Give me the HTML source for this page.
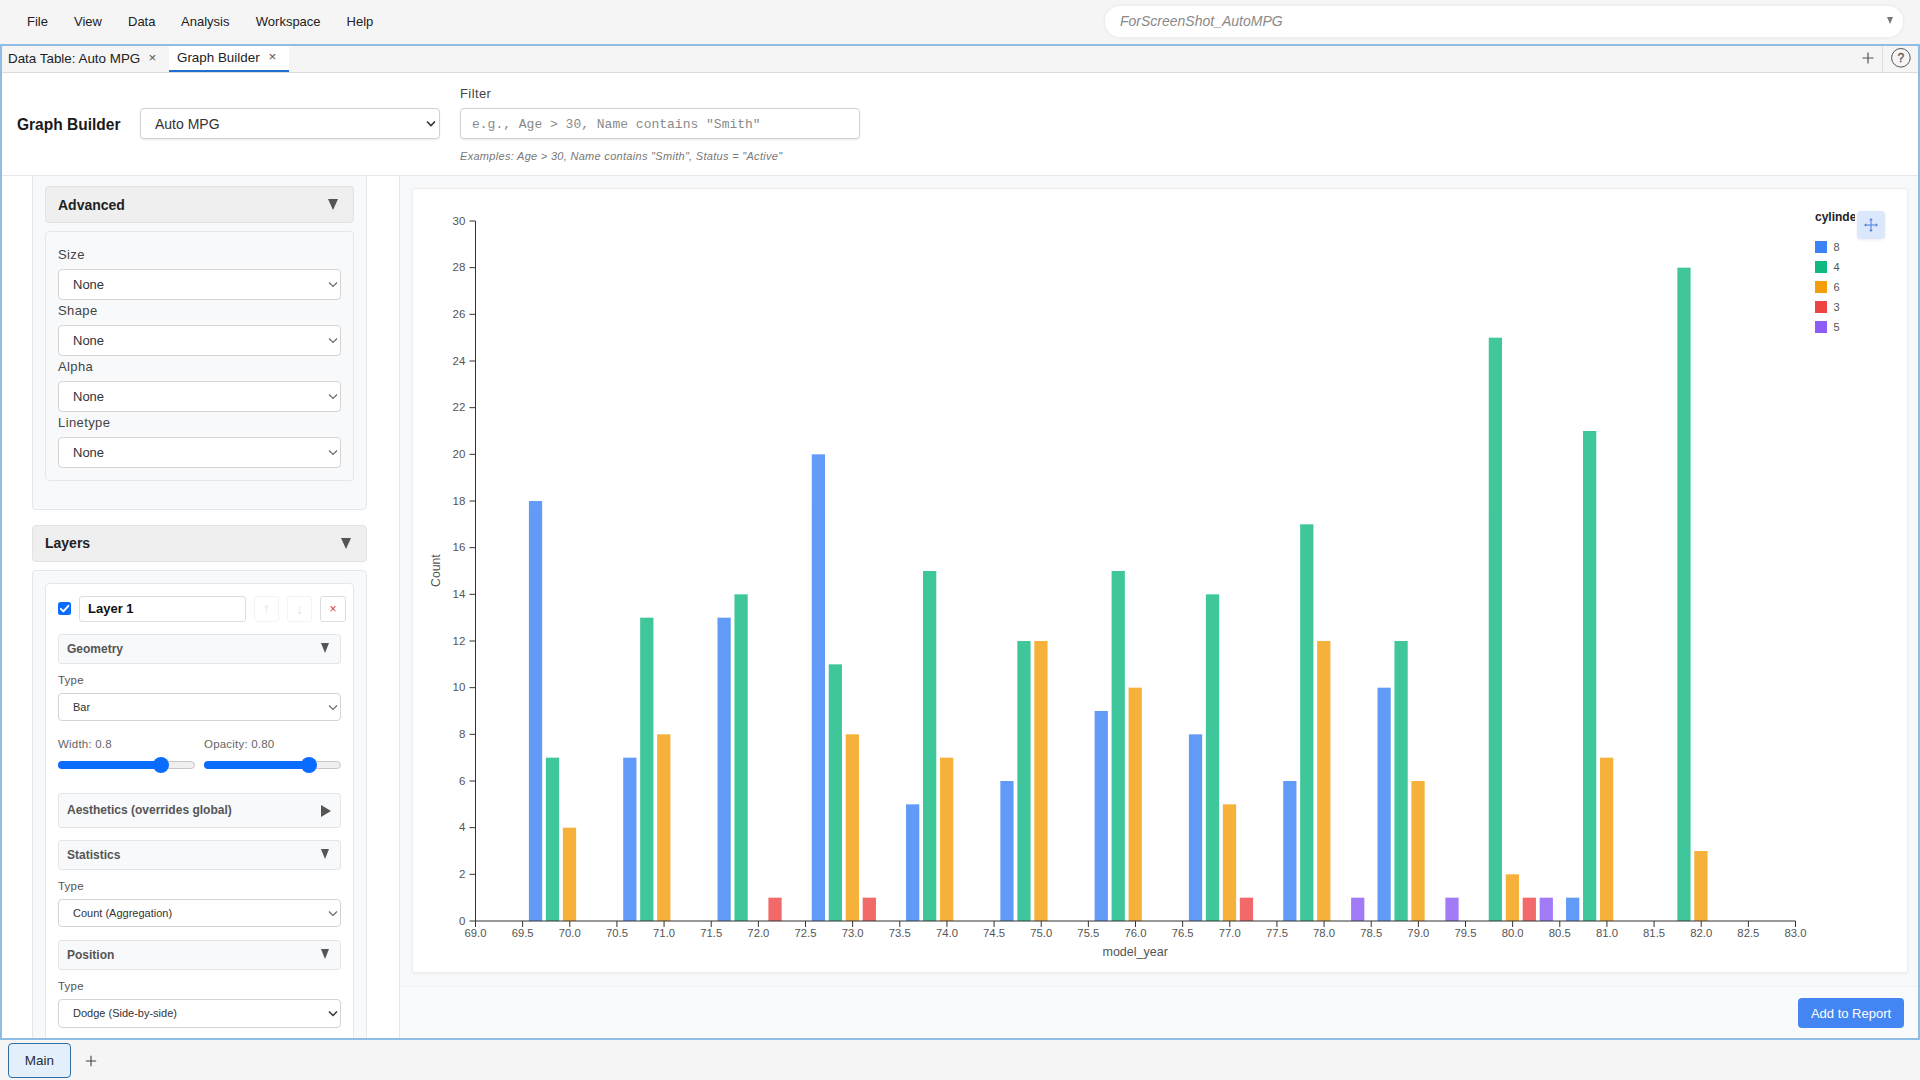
<!DOCTYPE html>
<html lang="en">
<head>
<meta charset="utf-8">
<title>Graph Builder</title>
<style>
*{box-sizing:border-box}
html,body{margin:0;padding:0}
body{width:1920px;height:1080px;overflow:hidden;background:#f5f5f5;font-family:"Liberation Sans",sans-serif;color:#222;position:relative}
.abs{position:absolute}
/* menu */
.menubar{position:absolute;left:0;top:0;width:1920px;height:44px;background:#f5f5f5}
.menubar span{position:absolute;top:14px;font-size:13px;line-height:15px;color:#222;white-space:nowrap}
.search{position:absolute;left:1105px;top:6px;width:798px;height:31px;border-radius:16px;background:#fff;box-shadow:0 0 4px rgba(0,0,0,.07)}
.search i{position:absolute;left:15px;top:7px;font-size:14px;line-height:16px;color:#8a8a8a;font-style:italic}
.search b{position:absolute;right:10px;top:11px;width:0;height:0;border-left:3.5px solid transparent;border-right:3.5px solid transparent;border-top:7.5px solid #777}
/* frame */
.frame{position:absolute;left:0;top:44px;width:1920px;height:996px;border:2px solid #8fbde4;background:#fff}
.tabbar{position:absolute;left:2px;top:46px;width:1916px;height:27px;background:#f5f5f5;border-bottom:1px solid #dcdcdc}
.tab{position:absolute;top:0;height:26px;font-size:13px;line-height:15px;color:#222;white-space:nowrap}
.tab span{position:absolute;top:5px}
.tab.on{background:#fff;border-bottom:2px solid #1f6fd1}
.tab .x{color:#555;font-size:13.5px}
/* header */
.hdr{position:absolute;left:2px;top:73px;width:1916px;height:103px;background:#fff;border-bottom:1px solid #e5e7eb}
.title{position:absolute;left:14.5px;top:41.5px;font-size:16px;transform:scaleX(.97);transform-origin:0 0;line-height:20px;font-weight:bold;color:#1a1a1a;white-space:nowrap}
.sel{position:absolute;background:#fff;border:1px solid #d0d3d6;border-radius:4px;color:#222;white-space:nowrap}
.sel span{position:absolute}
.sel svg{position:absolute}
.s1{width:283px;height:31px;border-color:#d4d4d4}
.s1 span{left:14px;top:7px;font-size:13px;line-height:15px;color:#333}
.s1 svg{left:269px;top:11px}
.s2{width:283px;height:28px;border-color:#d4d4d4}
.s2 span{left:14px;top:7px;font-size:11px;line-height:13px;color:#333}
.s2 svg{left:269px;top:10px}
.lbl{position:absolute;font-size:13px;line-height:15px;color:#444;white-space:nowrap;letter-spacing:.4px}
.lbl2{position:absolute;font-size:11.5px;line-height:13px;color:#555;white-space:nowrap;letter-spacing:.2px}
/* sidebar */
.side{position:absolute;left:2px;top:176px;width:398px;height:862px;background:#fff;border-right:1px solid #e5e7eb;overflow:hidden}
.panel{position:absolute;background:#f8f9fa;border:1px solid #e5e7eb}
.sechd{position:absolute;background:#efefef;border:1px solid #e2e2e2;border-radius:4px;font-weight:bold;font-size:14px;color:#222}
.sechd span{position:absolute;white-space:nowrap}
.tri{position:absolute;width:0;height:0;border-left:5.5px solid transparent;border-right:5.5px solid transparent;border-top:11px solid #555}
.trir{position:absolute;width:0;height:0;border-top:6px solid transparent;border-bottom:6px solid transparent;border-left:10px solid #555}
.subhd{position:absolute;left:58px;width:283px;background:#f8f9fa;border:1px solid #e4e6e9;border-radius:3px;font-weight:bold;font-size:12px;color:#555}
.subhd span{position:absolute;left:8px;white-space:nowrap}
.main{position:absolute;left:400px;top:176px;width:1518px;height:862px;background:#f8f9fa}
.card{position:absolute;left:412px;top:188px;width:1496px;height:785px;background:#fff;border:1px solid #ececec;border-radius:3px;box-shadow:0 1px 3px rgba(0,0,0,.05)}
.foot{position:absolute;left:400px;top:986px;width:1518px;height:52px;border-top:1px solid #f0f2f5;background:#f8fafc}
.btn{position:absolute;left:1798px;top:998px;width:106px;height:30px;background:#4285f3;border-radius:4px;color:#fff;font-size:13px;line-height:31px;text-align:center}
.bottombar{position:absolute;left:0;top:1040px;width:1920px;height:40px;background:#f5f5f5}
.maintab{position:absolute;left:8px;top:1043px;width:63px;height:35px;border:1px solid #2f6ea5;border-radius:4px;background:#e3f0fb;font-size:13.5px;line-height:33px;text-align:center;color:#1f2d3a}
svg.chart{position:absolute;left:0;top:0}
svg.chart .tk{font-family:"Liberation Sans",sans-serif;font-size:10px;fill:#555}
svg.chart .ax{font-family:"Liberation Sans",sans-serif;font-size:12px;fill:#555}
.leg{position:absolute;margin-left:.5px;font-size:11px;color:#555;line-height:12px}
.sw{position:absolute;left:1815px;width:12px;height:12px}
</style>
</head>
<body>
<div class="menubar">
  <span style="left:27px">File</span>
  <span style="left:74px">View</span>
  <span style="left:128px">Data</span>
  <span style="left:181px">Analysis</span>
  <span style="left:255.8px">Workspace</span>
  <span style="left:346.6px">Help</span>
  <div class="search"><i>ForScreenShot_AutoMPG</i><b></b></div>
</div>
<div class="frame"></div>
<div class="tabbar">
  <div class="tab" style="left:0;width:167px"><span style="left:6px;top:5px;font-size:13.4px">Data Table: Auto MPG</span><span class="x" style="left:146.5px;top:4px">×</span></div>
  <div class="tab on" style="left:167px;width:120px"><span style="left:8px;top:4px;font-size:13.4px">Graph Builder</span><span class="x" style="left:99.5px;top:3px">×</span></div>
  <div class="abs" style="left:1880px;top:0;width:1px;height:26px;background:#dedede"></div><svg class="abs" style="left:1856px;top:2px" width="56" height="22" viewBox="0 0 56 22"><path d="M10 4.5v11M4.5 10h11" stroke="#555" stroke-width="1.2" fill="none"/><circle cx="42.9" cy="9.8" r="9.3" fill="none" stroke="#555" stroke-width="1"/><text x="42.9" y="14" text-anchor="middle" font-family="Liberation Sans, sans-serif" font-size="12" fill="#555" stroke="#555" stroke-width=".3">?</text></svg>
</div>
<div class="hdr">
  <div class="title">Graph Builder</div>
  <div class="sel" style="left:138px;top:35px;width:300px;height:31px;box-shadow:0 1px 2px rgba(0,0,0,.08)"><span style="left:14px;top:7px;font-size:14px;line-height:16px;color:#333">Auto MPG</span><svg style="left:285px;top:11px" width="10" height="8" viewBox="0 0 10 8"><path d="M1 1.5l4 4 4-4" fill="none" stroke="#333" stroke-width="1.6"/></svg></div>
  <div class="lbl" style="left:458px;top:13px">Filter</div>
  <div class="sel" style="left:458px;top:35px;width:400px;height:31px;box-shadow:0 1px 2px rgba(0,0,0,.08)"><span style="left:11px;top:8px;font-family:'Liberation Mono',monospace;font-size:13px;line-height:15px;color:#8a8a8a">e.g., Age &gt; 30, Name contains "Smith"</span></div>
  <div class="abs" style="left:458px;top:77px;font-size:11px;line-height:13px;font-style:italic;color:#777;white-space:nowrap;letter-spacing:.3px">Examples: Age &gt; 30, Name contains "Smith", Status = "Active"</div>
</div>

<div class="side">
 <div style="position:absolute;left:-2px;top:-176px">
  <!-- aesthetics panel (scrolled) -->
  <div class="panel" style="left:32px;top:160px;width:335px;height:350px;border-radius:0 0 4px 4px"></div>
  <div class="sechd" style="left:45px;top:186px;width:309px;height:37px"><span style="left:12px;top:10px">Advanced</span><i class="tri" style="left:282px;top:12px"></i></div>
  <div class="panel" style="left:45px;top:231px;width:309px;height:250px;border-radius:4px"></div>
  <div class="lbl" style="left:58px;top:247px">Size</div>
  <div class="sel s1" style="left:58px;top:269px"><span>None</span><svg width="10" height="8" viewBox="0 0 10 8"><path d="M1 1.5l4 4 4-4" fill="none" stroke="#666" stroke-width="1.1"/></svg></div>
  <div class="lbl" style="left:58px;top:303px">Shape</div>
  <div class="sel s1" style="left:58px;top:325px"><span>None</span><svg width="10" height="8" viewBox="0 0 10 8"><path d="M1 1.5l4 4 4-4" fill="none" stroke="#666" stroke-width="1.1"/></svg></div>
  <div class="lbl" style="left:58px;top:359px">Alpha</div>
  <div class="sel s1" style="left:58px;top:381px"><span>None</span><svg width="10" height="8" viewBox="0 0 10 8"><path d="M1 1.5l4 4 4-4" fill="none" stroke="#666" stroke-width="1.1"/></svg></div>
  <div class="lbl" style="left:58px;top:415px">Linetype</div>
  <div class="sel s1" style="left:58px;top:437px"><span>None</span><svg width="10" height="8" viewBox="0 0 10 8"><path d="M1 1.5l4 4 4-4" fill="none" stroke="#666" stroke-width="1.1"/></svg></div>

  <!-- layers -->
  <div class="sechd" style="left:32px;top:525px;width:335px;height:37px"><span style="left:12px;top:9px">Layers</span><i class="tri" style="left:308px;top:12px"></i></div>
  <div class="panel" style="left:32px;top:570px;width:335px;height:520px;border-radius:4px"></div>
  <div class="panel" style="left:45px;top:583px;width:309px;height:500px;border-radius:4px;background:#fff"></div>
  <svg class="abs" style="left:58px;top:602px" width="13" height="13" viewBox="0 0 13 13"><rect width="13" height="13" rx="2.5" fill="#0a6cff"/><path d="M2.8 6.8l2.6 2.6 5-5.6" fill="none" stroke="#fff" stroke-width="1.9" stroke-linecap="round" stroke-linejoin="round"/></svg>
  <div class="sel" style="left:79px;top:596px;width:167px;height:26px;border-color:#ddd;border-radius:3px"><span style="left:8px;top:4px;font-size:13px;line-height:15px;font-weight:bold;color:#111">Layer 1</span></div>
  <div class="sel" style="left:254px;top:596px;width:25px;height:26px;border-color:#f3f3f3;border-radius:3px;color:#e2e2e2;font-size:14px;line-height:22px;text-align:center">↑</div>
  <div class="sel" style="left:287px;top:596px;width:25px;height:26px;border-color:#f3f3f3;border-radius:3px;color:#e2e2e2;font-size:14px;line-height:24px;text-align:center">↓</div>
  <div class="sel" style="left:320px;top:596px;width:26px;height:26px;border-color:#ddd;border-radius:3px;color:#dc3545;font-size:12px;line-height:24.5px;text-align:center">×</div>

  <div class="subhd" style="top:634px;height:30px"><span style="top:7px">Geometry</span><i class="tri" style="left:261.5px;top:8px;border-left-width:4.8px;border-right-width:4.8px;border-top-width:10px"></i></div>
  <div class="lbl2" style="left:58px;top:674px">Type</div>
  <div class="sel s2" style="left:58px;top:693px"><span>Bar</span><svg width="10" height="8" viewBox="0 0 10 8"><path d="M1 1.5l4 4 4-4" fill="none" stroke="#666" stroke-width="1.1"/></svg></div>
  <div class="lbl2" style="left:58px;top:738px;color:#666">Width: 0.8</div>
  <div class="lbl2" style="left:204px;top:738px;color:#666">Opacity: 0.80</div>
  <!-- sliders -->
  <div class="abs" style="left:58px;top:761px;width:137px;height:8px;border-radius:4px;background:#efefef;border:1px solid #c8c8c8"></div>
  <div class="abs" style="left:58px;top:761px;width:104px;height:8px;border-radius:4px;background:#0a6cff"></div>
  <div class="abs" style="left:152.5px;top:757px;width:16px;height:16px;border-radius:8px;background:#0a6cff"></div>
  <div class="abs" style="left:204px;top:761px;width:137px;height:8px;border-radius:4px;background:#efefef;border:1px solid #c8c8c8"></div>
  <div class="abs" style="left:204px;top:761px;width:107px;height:8px;border-radius:4px;background:#0a6cff"></div>
  <div class="abs" style="left:301px;top:757px;width:16px;height:16px;border-radius:8px;background:#0a6cff"></div>

  <div class="subhd" style="top:793px;height:35px"><span style="top:9px">Aesthetics (overrides global)</span><i class="trir" style="left:262px;top:11px"></i></div>
  <div class="subhd" style="top:840px;height:30px"><span style="top:7px">Statistics</span><i class="tri" style="left:261.5px;top:8px;border-left-width:4.8px;border-right-width:4.8px;border-top-width:10px"></i></div>
  <div class="lbl2" style="left:58px;top:880px">Type</div>
  <div class="sel s2" style="left:58px;top:899px"><span>Count (Aggregation)</span><svg width="10" height="8" viewBox="0 0 10 8"><path d="M1 1.5l4 4 4-4" fill="none" stroke="#666" stroke-width="1.1"/></svg></div>
  <div class="subhd" style="top:940px;height:30px"><span style="top:7px">Position</span><i class="tri" style="left:261.5px;top:8px;border-left-width:4.8px;border-right-width:4.8px;border-top-width:10px"></i></div>
  <div class="lbl2" style="left:58px;top:980px">Type</div>
  <div class="sel s2" style="left:58px;top:999px;height:29px"><span>Dodge (Side-by-side)</span><svg width="10" height="8" viewBox="0 0 10 8"><path d="M1 1.5l4 4 4-4" fill="none" stroke="#333" stroke-width="1.5"/></svg></div>
 </div>
</div>

<div class="main"></div>
<div class="card"></div>
<div class="foot"></div>
<div class="btn">Add to Report</div>
<svg class="chart" width="1920" height="1080" viewBox="0 0 1920 1080">
<g opacity="0.8">
<rect x="528.92" y="501.00" width="13.25" height="420.00" fill="#3b82f6"/>
<rect x="545.89" y="757.67" width="13.25" height="163.33" fill="#10b981"/>
<rect x="562.86" y="827.67" width="13.25" height="93.33" fill="#f59e0b"/>
<rect x="623.20" y="757.67" width="13.25" height="163.33" fill="#3b82f6"/>
<rect x="640.17" y="617.67" width="13.25" height="303.33" fill="#10b981"/>
<rect x="657.15" y="734.33" width="13.25" height="186.67" fill="#f59e0b"/>
<rect x="717.49" y="617.67" width="13.25" height="303.33" fill="#3b82f6"/>
<rect x="734.46" y="594.33" width="13.25" height="326.67" fill="#10b981"/>
<rect x="768.40" y="897.67" width="13.25" height="23.33" fill="#ef4444"/>
<rect x="811.77" y="454.33" width="13.25" height="466.67" fill="#3b82f6"/>
<rect x="828.75" y="664.33" width="13.25" height="256.67" fill="#10b981"/>
<rect x="845.72" y="734.33" width="13.25" height="186.67" fill="#f59e0b"/>
<rect x="862.69" y="897.67" width="13.25" height="23.33" fill="#ef4444"/>
<rect x="906.06" y="804.33" width="13.25" height="116.67" fill="#3b82f6"/>
<rect x="923.03" y="571.00" width="13.25" height="350.00" fill="#10b981"/>
<rect x="940.00" y="757.67" width="13.25" height="163.33" fill="#f59e0b"/>
<rect x="1000.35" y="781.00" width="13.25" height="140.00" fill="#3b82f6"/>
<rect x="1017.32" y="641.00" width="13.25" height="280.00" fill="#10b981"/>
<rect x="1034.29" y="641.00" width="13.25" height="280.00" fill="#f59e0b"/>
<rect x="1094.63" y="711.00" width="13.25" height="210.00" fill="#3b82f6"/>
<rect x="1111.60" y="571.00" width="13.25" height="350.00" fill="#10b981"/>
<rect x="1128.58" y="687.67" width="13.25" height="233.33" fill="#f59e0b"/>
<rect x="1188.92" y="734.33" width="13.25" height="186.67" fill="#3b82f6"/>
<rect x="1205.89" y="594.33" width="13.25" height="326.67" fill="#10b981"/>
<rect x="1222.86" y="804.33" width="13.25" height="116.67" fill="#f59e0b"/>
<rect x="1239.83" y="897.67" width="13.25" height="23.33" fill="#ef4444"/>
<rect x="1283.20" y="781.00" width="13.25" height="140.00" fill="#3b82f6"/>
<rect x="1300.17" y="524.33" width="13.25" height="396.67" fill="#10b981"/>
<rect x="1317.15" y="641.00" width="13.25" height="280.00" fill="#f59e0b"/>
<rect x="1351.09" y="897.67" width="13.25" height="23.33" fill="#8b5cf6"/>
<rect x="1377.49" y="687.67" width="13.25" height="233.33" fill="#3b82f6"/>
<rect x="1394.46" y="641.00" width="13.25" height="280.00" fill="#10b981"/>
<rect x="1411.43" y="781.00" width="13.25" height="140.00" fill="#f59e0b"/>
<rect x="1445.38" y="897.67" width="13.25" height="23.33" fill="#8b5cf6"/>
<rect x="1488.75" y="337.67" width="13.25" height="583.33" fill="#10b981"/>
<rect x="1505.72" y="874.33" width="13.25" height="46.67" fill="#f59e0b"/>
<rect x="1522.69" y="897.67" width="13.25" height="23.33" fill="#ef4444"/>
<rect x="1539.66" y="897.67" width="13.25" height="23.33" fill="#8b5cf6"/>
<rect x="1566.06" y="897.67" width="13.25" height="23.33" fill="#3b82f6"/>
<rect x="1583.03" y="431.00" width="13.25" height="490.00" fill="#10b981"/>
<rect x="1600.00" y="757.67" width="13.25" height="163.33" fill="#f59e0b"/>
<rect x="1677.32" y="267.67" width="13.25" height="653.33" fill="#10b981"/>
<rect x="1694.29" y="851.00" width="13.25" height="70.00" fill="#f59e0b"/>
</g>
<g stroke="#333" stroke-width="1" fill="none">
<path d="M469.5,221.0H475.5V921.0H469.5"/>
<path d="M475.5,927.0V921.0H1795.5V927.0"/>
<path d="M469.5,874.33H475.5"/>
<path d="M469.5,827.67H475.5"/>
<path d="M469.5,781.00H475.5"/>
<path d="M469.5,734.33H475.5"/>
<path d="M469.5,687.67H475.5"/>
<path d="M469.5,641.00H475.5"/>
<path d="M469.5,594.33H475.5"/>
<path d="M469.5,547.67H475.5"/>
<path d="M469.5,501.00H475.5"/>
<path d="M469.5,454.33H475.5"/>
<path d="M469.5,407.67H475.5"/>
<path d="M469.5,361.00H475.5"/>
<path d="M469.5,314.33H475.5"/>
<path d="M469.5,267.67H475.5"/>
<path d="M522.64,921.0v6"/>
<path d="M569.79,921.0v6"/>
<path d="M616.93,921.0v6"/>
<path d="M664.07,921.0v6"/>
<path d="M711.21,921.0v6"/>
<path d="M758.36,921.0v6"/>
<path d="M805.50,921.0v6"/>
<path d="M852.64,921.0v6"/>
<path d="M899.79,921.0v6"/>
<path d="M946.93,921.0v6"/>
<path d="M994.07,921.0v6"/>
<path d="M1041.21,921.0v6"/>
<path d="M1088.36,921.0v6"/>
<path d="M1135.50,921.0v6"/>
<path d="M1182.64,921.0v6"/>
<path d="M1229.79,921.0v6"/>
<path d="M1276.93,921.0v6"/>
<path d="M1324.07,921.0v6"/>
<path d="M1371.21,921.0v6"/>
<path d="M1418.36,921.0v6"/>
<path d="M1465.50,921.0v6"/>
<path d="M1512.64,921.0v6"/>
<path d="M1559.79,921.0v6"/>
<path d="M1606.93,921.0v6"/>
<path d="M1654.07,921.0v6"/>
<path d="M1701.21,921.0v6"/>
<path d="M1748.36,921.0v6"/>
</g>
<g class="tk" text-anchor="end">
<text transform="translate(465.30,924.60) scale(1.15,1)">0</text>
<text transform="translate(465.30,877.93) scale(1.15,1)">2</text>
<text transform="translate(465.30,831.27) scale(1.15,1)">4</text>
<text transform="translate(465.30,784.60) scale(1.15,1)">6</text>
<text transform="translate(465.30,737.93) scale(1.15,1)">8</text>
<text transform="translate(465.30,691.27) scale(1.15,1)">10</text>
<text transform="translate(465.30,644.60) scale(1.15,1)">12</text>
<text transform="translate(465.30,597.93) scale(1.15,1)">14</text>
<text transform="translate(465.30,551.27) scale(1.15,1)">16</text>
<text transform="translate(465.30,504.60) scale(1.15,1)">18</text>
<text transform="translate(465.30,457.93) scale(1.15,1)">20</text>
<text transform="translate(465.30,411.27) scale(1.15,1)">22</text>
<text transform="translate(465.30,364.60) scale(1.15,1)">24</text>
<text transform="translate(465.30,317.93) scale(1.15,1)">26</text>
<text transform="translate(465.30,271.27) scale(1.15,1)">28</text>
<text transform="translate(465.30,224.60) scale(1.15,1)">30</text>
</g>
<g class="tk" text-anchor="middle">
<text transform="translate(475.50,936.70) scale(1.13,1)">69.0</text>
<text transform="translate(522.64,936.70) scale(1.13,1)">69.5</text>
<text transform="translate(569.79,936.70) scale(1.13,1)">70.0</text>
<text transform="translate(616.93,936.70) scale(1.13,1)">70.5</text>
<text transform="translate(664.07,936.70) scale(1.13,1)">71.0</text>
<text transform="translate(711.21,936.70) scale(1.13,1)">71.5</text>
<text transform="translate(758.36,936.70) scale(1.13,1)">72.0</text>
<text transform="translate(805.50,936.70) scale(1.13,1)">72.5</text>
<text transform="translate(852.64,936.70) scale(1.13,1)">73.0</text>
<text transform="translate(899.79,936.70) scale(1.13,1)">73.5</text>
<text transform="translate(946.93,936.70) scale(1.13,1)">74.0</text>
<text transform="translate(994.07,936.70) scale(1.13,1)">74.5</text>
<text transform="translate(1041.21,936.70) scale(1.13,1)">75.0</text>
<text transform="translate(1088.36,936.70) scale(1.13,1)">75.5</text>
<text transform="translate(1135.50,936.70) scale(1.13,1)">76.0</text>
<text transform="translate(1182.64,936.70) scale(1.13,1)">76.5</text>
<text transform="translate(1229.79,936.70) scale(1.13,1)">77.0</text>
<text transform="translate(1276.93,936.70) scale(1.13,1)">77.5</text>
<text transform="translate(1324.07,936.70) scale(1.13,1)">78.0</text>
<text transform="translate(1371.21,936.70) scale(1.13,1)">78.5</text>
<text transform="translate(1418.36,936.70) scale(1.13,1)">79.0</text>
<text transform="translate(1465.50,936.70) scale(1.13,1)">79.5</text>
<text transform="translate(1512.64,936.70) scale(1.13,1)">80.0</text>
<text transform="translate(1559.79,936.70) scale(1.13,1)">80.5</text>
<text transform="translate(1606.93,936.70) scale(1.13,1)">81.0</text>
<text transform="translate(1654.07,936.70) scale(1.13,1)">81.5</text>
<text transform="translate(1701.21,936.70) scale(1.13,1)">82.0</text>
<text transform="translate(1748.36,936.70) scale(1.13,1)">82.5</text>
<text transform="translate(1795.50,936.70) scale(1.13,1)">83.0</text>
</g>
<text class="ax" text-anchor="middle" transform="translate(1135.2,955.6) scale(1.045,1)">model_year</text>
<text class="ax" text-anchor="middle" transform="translate(440,570.6) rotate(-90) scale(1.02,1)">Count</text>
</svg>
<!-- legend -->
<div class="abs" style="left:1815px;top:209.5px;width:40px;height:16px;overflow:hidden;font-size:12px;line-height:15px;font-weight:bold;color:#222;white-space:nowrap">cylinders</div>
<div class="abs" style="left:1857px;top:211px;width:28px;height:28px;border-radius:4px;background:#dbe8fc;box-shadow:0 1px 3px rgba(0,0,0,.08)">
 <svg class="abs" style="left:7px;top:7px" width="14" height="14" viewBox="0 0 14 14"><path d="M7 1v12M1 7h12" stroke="#4a7fe0" stroke-width="1" fill="none"/><path d="M7 0l1.8 2.2H5.2zM7 14l1.8-2.2H5.2zM0 7l2.2-1.8v3.6zM14 7l-2.2-1.8v3.6z" fill="#4a7fe0"/></svg>
</div>
<div class="sw" style="top:241px;background:#3b82f6"></div><div class="leg" style="left:1833px;top:241px">8</div>
<div class="sw" style="top:261px;background:#10b981"></div><div class="leg" style="left:1833px;top:261px">4</div>
<div class="sw" style="top:281px;background:#f59e0b"></div><div class="leg" style="left:1833px;top:281px">6</div>
<div class="sw" style="top:301px;background:#ef4444"></div><div class="leg" style="left:1833px;top:301px">3</div>
<div class="sw" style="top:321px;background:#8b5cf6"></div><div class="leg" style="left:1833px;top:321px">5</div>

<div class="bottombar"></div>
<div class="maintab">Main</div>
<svg class="abs" style="left:84.4px;top:1053.6px" width="14" height="14" viewBox="0 0 14 14"><path d="M7 1.8v10.4M1.8 7h10.4" stroke="#444" stroke-width="1.1" fill="none"/></svg>
</body>
</html>
